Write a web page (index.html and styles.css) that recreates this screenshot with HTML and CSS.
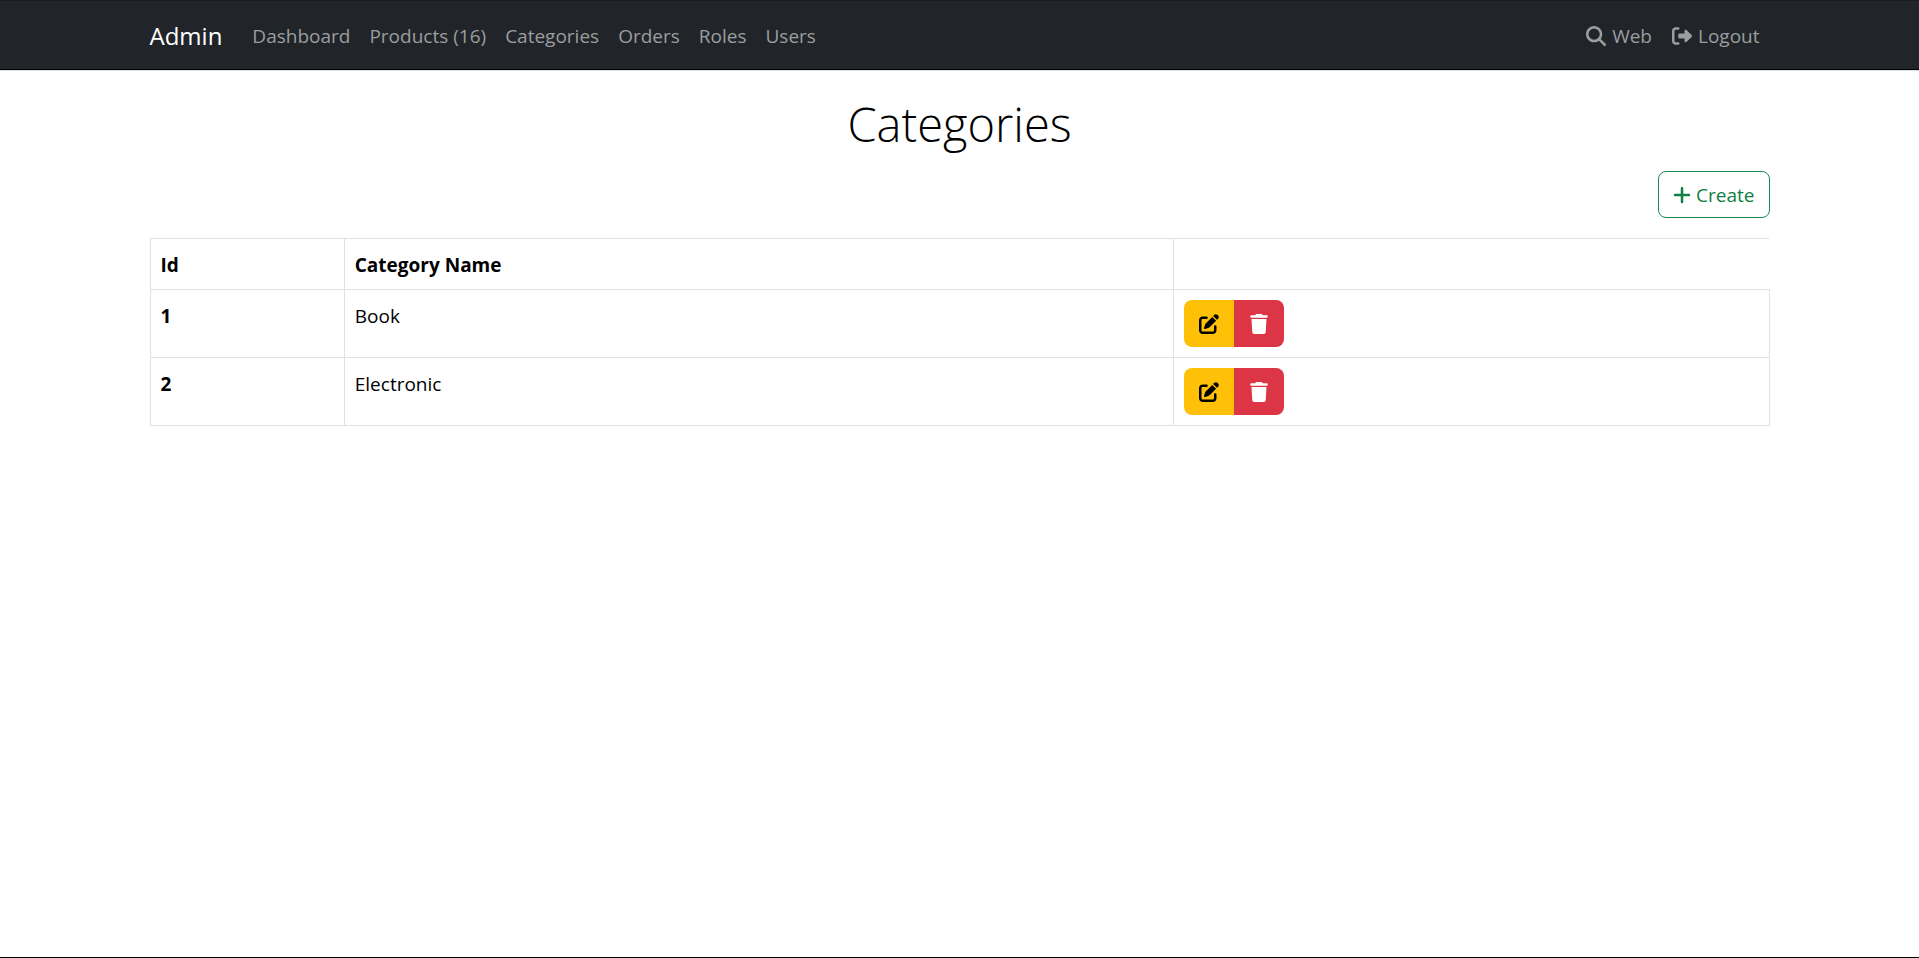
FILE: index.html
```html
<!DOCTYPE html>
<html lang="en">
<head>
<meta charset="utf-8">
<title>Categories - Admin</title>
<link rel="stylesheet" href="styles.css">
</head>
<body>
<svg class="sprite" aria-hidden="true">
  <symbol id="search" viewBox="0 0 512 512"><path d="M416 208c0 45.900-14.900 88.300-40 122.700L502.600 457.400c12.500 12.500 12.500 32.800 0 45.300s-32.800 12.500-45.300 0L330.700 376c-34.400 25.200-76.800 40-122.700 40C93.100 416 0 322.900 0 208S93.100 0 208 0S416 93.100 416 208zM208 352a144 144 0 1 0 0-288 144 144 0 1 0 0 288z"/></symbol>
  <symbol id="logout" viewBox="0 0 512 512"><path d="M377.900 105.900L500.700 228.700c7.200 7.200 11.300 17.100 11.300 27.300s-4.100 20.100-11.300 27.300L377.900 406.100c-6.400 6.400-15 9.900-24 9.900c-18.700 0-33.900-15.200-33.900-33.900l0-62.100-128 0c-17.700 0-32-14.300-32-32l0-64c0-17.700 14.300-32 32-32l128 0 0-62.100c0-18.700 15.200-33.900 33.900-33.900c9 0 17.600 3.600 24 9.900zM160 96L96 96c-17.700 0-32 14.300-32 32l0 256c0 17.700 14.300 32 32 32l64 0c17.700 0 32 14.300 32 32s-14.300 32-32 32l-64 0c-53 0-96-43-96-96L0 128C0 75 43 32 96 32l64 0c17.700 0 32 14.300 32 32s-14.300 32-32 32z"/></symbol>
  <symbol id="plus" viewBox="0 0 448 512"><path d="M256 80c0-17.700-14.300-32-32-32s-32 14.300-32 32V224H48c-17.700 0-32 14.300-32 32s14.300 32 32 32H192V432c0 17.700 14.300 32 32 32s32-14.300 32-32V288H400c17.700 0 32-14.300 32-32s-14.300-32-32-32H256V80z"/></symbol>
  <symbol id="edit" viewBox="0 0 512 512"><path d="M471.600 21.700c-21.900-21.900-57.300-21.900-79.200 0L362.300 51.700l97.900 97.900 30.100-30.100c21.900-21.900 21.900-57.300 0-79.200L471.600 21.700zm-299.200 220c-6.100 6.100-10.800 13.600-13.500 21.900l-29.600 88.800c-2.900 8.600-.6 18.100 5.800 24.600s15.900 8.700 24.600 5.800l88.800-29.600c8.200-2.700 15.700-7.400 21.900-13.500L437.700 172.300 339.700 74.300 172.400 241.700zM96 64C43 64 0 107 0 160V416c0 53 43 96 96 96H352c53 0 96-43 96-96V320c0-17.700-14.300-32-32-32s-32 14.300-32 32v96c0 17.700-14.300 32-32 32H96c-17.700 0-32-14.300-32-32V160c0-17.700 14.300-32 32-32h96c17.700 0 32-14.300 32-32s-14.300-32-32-32H96z"/></symbol>
  <symbol id="trash" viewBox="0 0 448 512"><path d="M135.200 17.700L128 32H32C14.300 32 0 46.300 0 64S14.300 96 32 96H416c17.700 0 32-14.300 32-32s-14.300-32-32-32H320l-7.200-14.300C307.400 6.800 296.300 0 284.200 0H163.800c-12.100 0-23.200 6.800-28.600 17.700zM416 128H32L53.200 467c1.600 25.300 22.600 45 47.900 45H346.900c25.300 0 46.300-19.700 47.900-45L416 128z"/></symbol>
</svg>
<header class="navbar">
  <nav class="container navbar-inner">
    <a class="brand" href="#">Admin</a>
    <ul class="nav-list nav-main">
      <li><a class="nav-link" href="#">Dashboard</a></li>
      <li><a class="nav-link" href="#">Products (16)</a></li>
      <li><a class="nav-link" href="#">Categories</a></li>
      <li><a class="nav-link" href="#">Orders</a></li>
      <li><a class="nav-link" href="#">Roles</a></li>
      <li><a class="nav-link" href="#">Users</a></li>
    </ul>
    <ul class="nav-list nav-end">
      <li><a class="nav-link" href="#"><svg class="icon"><use href="#search"/></svg>Web</a></li>
      <li><a class="nav-link" href="#"><svg class="icon"><use href="#logout"/></svg>Logout</a></li>
    </ul>
  </nav>
</header>
<main class="container content">
  <h1 class="title">Categories</h1>
  <div class="toolbar">
    <a class="btn btn-create" href="#"><svg class="icon icon-narrow"><use href="#plus"/></svg>Create</a>
  </div>
  <table class="table">
    <thead>
      <tr><th class="col-id" scope="col">Id</th><th class="col-name" scope="col">Category Name</th><td class="col-actions"></td></tr>
    </thead>
    <tbody>
      <tr>
        <th scope="row">1</th>
        <td>Book</td>
        <td><div class="btn-group"><button class="btn btn-edit" type="button" aria-label="Edit Book"><svg class="icon"><use href="#edit"/></svg></button><button class="btn btn-delete" type="button" aria-label="Delete Book"><svg class="icon icon-narrow"><use href="#trash"/></svg></button></div></td>
      </tr>
      <tr>
        <th scope="row">2</th>
        <td>Electronic</td>
        <td><div class="btn-group"><button class="btn btn-edit" type="button" aria-label="Edit Electronic"><svg class="icon"><use href="#edit"/></svg></button><button class="btn btn-delete" type="button" aria-label="Delete Electronic"><svg class="icon icon-narrow"><use href="#trash"/></svg></button></div></td>
      </tr>
    </tbody>
  </table>
</main>
</body>
</html>
```
FILE: styles.css
```css
* { box-sizing: border-box; }
body {
  margin: 0;
  min-height: 100vh;
  border-bottom: 1px solid #000;
  background: #fff;
  color: #000;
  font-family: "Open Sans", "Noto Sans", sans-serif;
  font-size: 19px;
  line-height: 30px;
}
a { color: inherit; text-decoration: none; }
.sprite { display: none; }
.container {
  width: 100%;
  max-width: 1650px;
  margin: 0 auto;
  padding: 0 15px;
}
.icon { width: 20px; height: 20px; fill: currentColor; flex: none; }
.icon-narrow { width: 18px; }

.navbar {
  padding-top: 2px;
  border-top: 1px solid #141d20;
  border-bottom: 1px solid #000;
  background: #212529;
  box-shadow: 0 1px 0 #dee2e6;
}
.navbar-inner { display: flex; align-items: center; min-height: 66px; }
.brand { margin-right: 20px; color: #fff; font-size: 24px; }
.nav-list { display: flex; margin: 0; padding: 0; list-style: none; }
.nav-link {
  display: flex;
  align-items: center;
  gap: 6px;
  padding: 10px;
  color: #9b9d9f;
}
.nav-main .nav-link { padding-right: 9px; }
.nav-end { margin-left: auto; }

.content { padding-top: 24px; }
.title {
  margin: 0 0 17px;
  font-size: 47px;
  font-weight: 300;
  line-height: 60px;
  text-align: center;
}
.toolbar { display: flex; justify-content: flex-end; margin-bottom: 20px; }
.btn {
  display: flex;
  align-items: center;
  justify-content: center;
  gap: 5px;
  min-height: 47px;
  padding: 0 14px;
  border: 1px solid transparent;
  border-radius: 8px;
  font: inherit;
}
.btn-create { border-color: #198754; color: #0f7f43; }

.table {
  width: 100%;
  border-collapse: collapse;
  table-layout: fixed;
  line-height: 32px;
}
.table th, .table td {
  padding: 10px 10px 8px;
  border: 1px solid #dee2e6;
  text-align: left;
  vertical-align: top;
}
.table th { font-weight: 700; }
.table .col-id { width: 12%; }
.table .col-name { width: 51.2%; }
.table thead .col-actions { border-right-style: hidden; }

.btn-group { display: flex; margin-bottom: 2px; }
.btn-group .btn { width: 50px; padding: 0; }
.btn-group .btn-edit { border-radius: 8px 0 0 8px; background: #ffc107; color: #000; }
.btn-group .btn-delete { border-radius: 0 8px 8px 0; background: #dc3545; color: #fff; }
```
